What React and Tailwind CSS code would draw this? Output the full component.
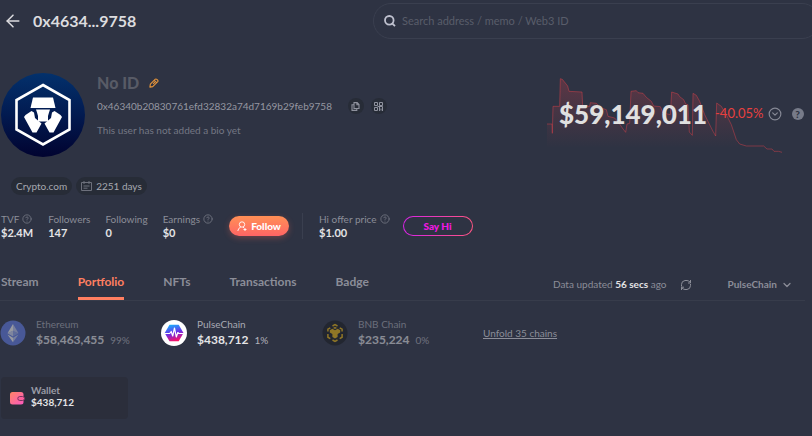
import { useState } from "react";
import { ArrowLeft, CircleHelp, ChevronDown, CircleChevronDown } from "lucide-react";

const TABS = ["Stream", "Portfolio", "NFTs", "Transactions", "Badge"];

const STATS = [
  { label: "TVF", value: "$2.4M", help: true },
  { label: "Followers", value: "147" },
  { label: "Following", value: "0" },
  { label: "Earnings", value: "$0", help: true },
];

const CHAINS = [
  { name: "Ethereum", value: "$58,463,455", share: "99%", Icon: EthereumIcon },
  { name: "PulseChain", value: "$438,712", share: "1%", Icon: PulseIcon },
  { name: "BNB Chain", value: "$235,224", share: "0%", Icon: BnbIcon },
];

function Avatar() {
  return (
    <svg viewBox="0 0 84 84" className="w-[84px] h-[84px] shrink-0" role="img" aria-label="Avatar">
      <defs>
        <linearGradient id="avatar" x1="0" y1="0" x2="0" y2="1">
          <stop offset="0" stopColor="#03316c" />
          <stop offset="0.5" stopColor="#021a50" />
          <stop offset="1" stopColor="#010330" />
        </linearGradient>
      </defs>
      <circle cx="42" cy="42" r="42" fill="url(#avatar)" />
      <path d="M42 12 68.500 27V56.500L42 71.500 15.500 56.500V27Z" fill="none" stroke="#fff" strokeWidth="2.600" />
      <path d="M32 24.500H52L54.500 35H29.500Z" fill="#fff" />
      <path d="M35 36.500H49L48 39.500 47 43V48.500H37V43L36 39.500Z" fill="#fff" />
      <path d="M30.500 38 33 39.500 34 45 40.500 50.500 35.500 59.500H31.500L23 44 24.500 42Z" fill="#fff" />
      <path d="M53.500 38 51 39.500 50 45 43.500 50.500 48.500 59.500H52.500L61 44 59.500 42Z" fill="#fff" />
    </svg>
  );
}

function EthereumIcon() {
  return (
    <svg viewBox="0 0 26 26" className="size-[26px] shrink-0">
      <circle cx="13" cy="13" r="12.500" fill="#627eea" />
      <path d="M13 4v6.700l5.500 2.500z" fill="#fff" opacity=".6" />
      <path d="M13 4 7.500 13.200 13 10.700z" fill="#fff" />
      <path d="M13 16.500 18.500 13.200 13 10.700z" fill="#fff" opacity=".3" />
      <path d="M7.500 13.200 13 16.500v-5.800z" fill="#fff" opacity=".7" />
      <path d="M13 17.800v4.400l5.500-7.700z" fill="#fff" opacity=".6" />
      <path d="M13 22.200v-4.400l-5.500-3.300z" fill="#fff" />
    </svg>
  );
}

function PulseIcon() {
  return (
    <svg viewBox="0 0 26 26" className="size-[26px] shrink-0">
      <defs>
        <linearGradient id="pulse" x1="0.3" y1="0" x2="0.6" y2="1">
          <stop offset="0" stopColor="#18aefc" />
          <stop offset="0.5" stopColor="#6b2fe8" />
          <stop offset="1" stopColor="#ff1060" />
        </linearGradient>
      </defs>
      <circle cx="13" cy="13" r="13" fill="#fff" />
      <path d="M8.500 4.800h9.200l4.800 8.200-4.800 8.200H8.500L3.700 13z" fill="url(#pulse)" />
      <path d="M3.500 13.500h5.200l1.500-2 1.500 4.500 1.800-8 1.800 9 1.500-4.500 1 1h5" fill="none" stroke="#fff" strokeWidth="1.200" strokeLinejoin="round" />
    </svg>
  );
}

function BnbIcon() {
  return (
    <svg viewBox="0 0 26 26" className="size-[26px] shrink-0">
      <circle cx="13" cy="13" r="12.500" fill="#181a1e" />
      <g fill="none" stroke="#f0b90b" strokeWidth="1.500">
        <path d="M10.500 6 13 4.600 15.500 6M5.900 11.500V9.200L8.300 7.800M20.100 11.500V9.200L17.700 7.800M5.900 14v3.200l2.400 1.400M20.100 14v3.200l-2.400 1.400M10.500 20 13 21.400 15.500 20" />
      </g>
      <path d="M7.800 10.200 10.300 8.700 13 10.200 15.700 8.700 18.200 10.200V12.400L15.600 14V17L13 18.500 10.400 17V14L7.800 12.400Z" fill="#f0b90b" />
      <path d="M11 7.900 13 6.800 15 7.900 13 9Z" fill="#f0b90b" />
    </svg>
  );
}

function TrendChart() {
  return (
    <svg viewBox="22 40 708 228" className="absolute left-0 top-0 w-[236px] h-[76px]" aria-hidden="true">
      <defs>
        <linearGradient id="trend" x1="0" y1="0" x2="0" y2="1">
          <stop offset="0" stopColor="#e0404a" stopOpacity="0.26" />
          <stop offset="1" stopColor="#e0404a" stopOpacity="0" />
        </linearGradient>
      </defs>
      <path
        d="M22 178H37L38 206 40 125H60L62 42 68 44 84 64 88 80 127 82 129 125H150L152 114 170 116 185 130 200 135 205 155 225 160 240 178 248 190 258 203 262 178 270 176 274 80 290 78 295 84 310 86 320 98 335 110 342 124 362 126 370 145 392 150 396 82 415 88 420 96 432 105 438 118 445 120 449 202 458 212 460 86 470 92 480 110 495 150 510 180 520 200 528 214 531 115 545 125 560 150 575 180 590 225 598 250H22Z"
        fill="url(#trend)"
      />
      <path
        d="M22 178H37L38 206 40 125H60L62 42 68 44 84 64 88 80 127 82 129 125H150L152 114 170 116 185 130 200 135 205 155 225 160 240 178 248 190 258 203 262 178 270 176 274 80 290 78 295 84 310 86 320 98 335 110 342 124 362 126 370 145 392 150 396 82 415 88 420 96 432 105 438 118 445 120 449 202 458 212 460 86 470 92 480 110 495 150 510 180 520 200 528 214 531 115 545 125 560 150 575 180 590 225 600 238 620 244H672L682 253H697L703 260H717L727 263"
        fill="none"
        stroke="#e0404a"
        strokeOpacity="0.45"
        strokeWidth="3"
      />
    </svg>
  );
}

function Header() {
  return (
    <header className="flex items-center pt-[3px] pl-[3px]">
      <button aria-label="Back" className="text-[#dcdcdf]">
        <ArrowLeft size={20} strokeWidth={1.8} />
      </button>
      <h1 className="ml-2.5 w-[340px] text-[16px] leading-6 font-bold text-[#dcdcdf]">0x4634...9758</h1>
      <label className="-mr-2 flex h-9 flex-1 items-center rounded-full border border-[#3a3f4f] pl-2.5">
        <svg viewBox="0 0 12 12" className="size-3 text-[#bfc1cf]" fill="none" stroke="currentColor" strokeWidth="1.800">
          <circle cx="5.300" cy="5.300" r="4.300" />
          <path d="m7.800 8 3.200 3.200" />
        </svg>
        <input
          type="search"
          aria-label="Search"
          placeholder="Search address / memo / Web3 ID"
          className="ml-1.5 flex-1 bg-transparent text-[11px] outline-none placeholder:text-[#595d6a]"
        />
      </label>
    </header>
  );
}

function Profile() {
  return (
    <section className="mt-[34px] flex items-start pl-px">
      <Avatar />
      <div className="ml-3 flex-1">
        <div className="flex h-5 items-center gap-2.5">
          <h2 className="text-[16px] leading-5 font-black text-[#585b66]">No ID</h2>
          <button aria-label="Edit name" className="text-[#e8963a]">
            <svg viewBox="0 0 11 11" className="size-2.5" fill="none" stroke="currentColor" strokeWidth="1.200" strokeLinejoin="round">
              <path d="M1 10 1.500 6.800 7 1.300Q7.800.7 8.600 1.500L9.500 2.400Q10.300 3.200 9.600 4L4.100 9.500ZM5.800 2.600l2.500 2.500M4.500 6.500l2-2" />
            </svg>
          </button>
        </div>
        <div className="mt-[5px] flex h-4 items-center">
          <span className="text-[10px] text-[#9597a1]">0x46340b20830761efd32832a74d7169b29feb9758</span>
          <button aria-label="Copy address" className="ml-4 grid size-4 place-items-center rounded-full bg-[#272c37] text-[#8f929e]">
            <svg viewBox="0 0 9 9" className="size-[9px]" fill="none" stroke="currentColor" strokeWidth="1.100">
              <path d="M3 .6h3.200L8 2.500v4H3ZM5.900.8v2h2M3 2.700H1v5.700h4.800v-2" />
            </svg>
          </button>
          <button aria-label="Show QR code" className="ml-[7px] grid size-4 place-items-center rounded-full bg-[#272c37] text-[#8f929e]">
            <svg viewBox="0 0 9 9" className="size-[9px]" fill="none" stroke="currentColor" strokeWidth="1">
              <path d="M.5.5h3v3h-3ZM5.500.5h3v3h-3ZM.5 5.500h3v3h-3ZM3.500 4.500h5v4.500M5.500 5v4M7 6.500v2" />
            </svg>
          </button>
        </div>
        <p className="mt-2 text-[10px] leading-4 text-[#747783]">This user has not added a bio yet</p>
      </div>
      <div className="relative mt-[5px] flex h-[72px] w-[265px] items-center pl-3">
        <TrendChart />
        <span className="relative text-[26px] leading-8 font-black text-[#e0e0e0]">$59,149,011</span>
        <span className="relative ml-2 text-[13px] text-[#e8403f]">-40.05%</span>
        <button aria-label="Show details" className="ml-1 text-[#858895]">
          <CircleChevronDown size={14} strokeWidth={2} />
        </button>
        <button aria-label="Help" className="ml-2.5 grid size-3 shrink-0 place-items-center rounded-full bg-[#777b89] text-[10px] leading-3 font-black text-[#2e3343]">
          ?
        </button>
      </div>
    </section>
  );
}

function Stat({ label, value, help }) {
  return (
    <div>
      <div className="flex h-3.5 items-center gap-[3px] text-[10px] text-[#8b8d98]">
        {label}
        {help && <CircleHelp size={10} strokeWidth={2} className="text-[#747783]" />}
      </div>
      <div className="text-[11px] leading-3.5 font-bold text-[#e4e4e6]">{value}</div>
    </div>
  );
}

function StatsRow() {
  return (
    <section className="mt-[17px] flex items-center pl-px">
      <div className="flex gap-[15px]">
        {STATS.map((stat) => (
          <Stat key={stat.label} {...stat} />
        ))}
      </div>
      <button className="ml-4 flex h-5 w-[60px] items-center justify-center gap-1 rounded-full bg-linear-to-b from-[#ff8f55] to-[#ff6464] text-[10px] font-black text-white shadow-[0_2px_6px_rgba(255,110,90,0.3)]">
        <svg viewBox="0 0 10 11" className="h-[11px] w-2.5" fill="none" stroke="currentColor" strokeWidth="0.900">
          <circle cx="5" cy="3.500" r="2.700" />
          <path d="M.8 10Q1.200 7 3.800 6M6 6.200l1.200.8M8 7v3M6.500 8.500h3" />
        </svg>
        Follow
      </button>
      <div className="ml-[13px] mr-4 h-[26px] w-px bg-[#3a3f4f]" />
      <Stat label="Hi offer price" value="$1.00" help />
      <button className="ml-[13px] h-5 w-[70px] rounded-full border border-transparent text-[10px] font-black text-[#f217e4] [background:linear-gradient(#2e3343,#2e3343)_padding-box,linear-gradient(90deg,#d823e6,#ff5583)_border-box]">
        Say Hi
      </button>
    </section>
  );
}

function TabBar({ tab, onChange }) {
  return (
    <div className="mt-[29px] mr-[7px] flex h-8 items-stretch border-b border-[#373c4b] pl-px">
      <nav className="flex gap-[39px]">
        {TABS.map((name) => (
          <button
            key={name}
            onClick={() => onChange(name)}
            className={`border-b-3 pb-0.5 text-[12px] font-bold ${
              tab === name ? "border-[#ff7f61] text-[#ff7f61]" : "border-transparent text-[#8b8d98]"
            }`}
          >
            {name}
          </button>
        ))}
      </nav>
      <div className="ml-auto flex items-center text-[10px] text-[#8b8d98]">
        <span>
          Data updated <b className="font-bold text-[#e4e4e6]">56 secs</b> ago
        </span>
        <button aria-label="Refresh" className="ml-3.5">
          <svg viewBox="0 0 12 12" className="size-3" fill="none" stroke="currentColor" strokeWidth="1">
            <path d="M1.500 7.500V5.500Q1.500 2 5 1.500H7Q9 1.700 10.500 3.500M10.500 1V4H8M10.500 5V6.500Q10.500 10 7 10.500H5Q3 10.300 1.500 8.500M1.500 11V8.200H4" />
          </svg>
        </button>
        <label className="relative ml-[35px] flex items-center">
          <select aria-label="Chain" className="field-sizing-content appearance-none bg-transparent pr-7 text-[10px] font-bold outline-none">
            <option>PulseChain</option>
            <option>Ethereum</option>
            <option>BNB Chain</option>
          </select>
          <ChevronDown size={12} strokeWidth={2.5} className="pointer-events-none absolute right-3" />
        </label>
      </div>
    </div>
  );
}

function ChainList({ selected, onSelect }) {
  return (
    <section className="mt-[15px] flex items-center">
      {CHAINS.map(({ name, value, share, Icon }) => (
        <button
          key={name}
          onClick={() => onSelect(name)}
          className={`flex w-[161px] items-center gap-2.5 text-left ${selected === name ? "" : "opacity-50"}`}
        >
          <Icon />
          <span className="pb-0.5">
            <span className="block text-[10px] leading-4 text-[#a8aab3]">{name}</span>
            <span className="flex items-baseline gap-1.5 leading-4">
              <b className="text-[12px] font-bold text-[#e4e4e6]">{value}</b>
              <span className="text-[10px] text-[#b0b2ba]">{share}</span>
            </span>
          </span>
        </button>
      ))}
      <a href="#chains" className="text-[10px] text-[#8b8d98] underline">Unfold 35 chains</a>
    </section>
  );
}

export default function App() {
  const [tab, setTab] = useState("Portfolio");
  const [chain, setChain] = useState("PulseChain");

  return (
    <div className="min-h-screen overflow-hidden bg-[#2e3343] font-[Lato,sans-serif]">
      <Header />
      <Profile />
      {/* Tags */}
      <div className="mt-5 flex gap-1 pl-[11px] text-[10px] text-[#a6a8b0]">
        <span className="flex h-[18px] items-center rounded-full bg-[#272c37] px-[5px]">Crypto.com</span>
        <span className="flex h-[18px] items-center gap-1 rounded-full bg-[#272c37] px-[5px]">
          <svg viewBox="0 0 11 10" className="h-2.5 w-[11px] text-[#6d707c]" fill="none" stroke="currentColor" strokeWidth="1">
            <path d="M.5 1.500h10v8H.5ZM3 0v3M8 0v3M2.500 5h6M2.500 7.200h4" />
          </svg>
          2251 days
        </span>
      </div>
      <StatsRow />
      <TabBar tab={tab} onChange={setTab} />
      <ChainList selected={chain} onSelect={setChain} />
      {/* Wallet card */}
      <section className="mt-[27px] ml-px flex h-[42px] w-[127px] items-center gap-[6px] rounded bg-[#2b2e3b] pl-[9px]">
        <svg viewBox="0 0 15 13" className="h-[13px] w-[15px]">
          <defs>
            <linearGradient id="wallet" x1="0" y1="0" x2="1" y2="1">
              <stop offset="0" stopColor="#ff8364" />
              <stop offset="1" stopColor="#fb59c0" />
            </linearGradient>
          </defs>
          <rect width="13.500" height="12.500" rx="2.500" fill="url(#wallet)" />
          <rect x="7.800" y="4.500" width="6.700" height="4" rx="2" fill="#fb5f9b" stroke="#7d3561" strokeWidth="1" />
        </svg>
        <div className="pb-1 text-[10px] leading-3 font-bold">
          <div className="text-[#9a9ca6]">Wallet</div>
          <div className="text-[#e4e4e6]">$438,712</div>
        </div>
      </section>
    </div>
  );
}
